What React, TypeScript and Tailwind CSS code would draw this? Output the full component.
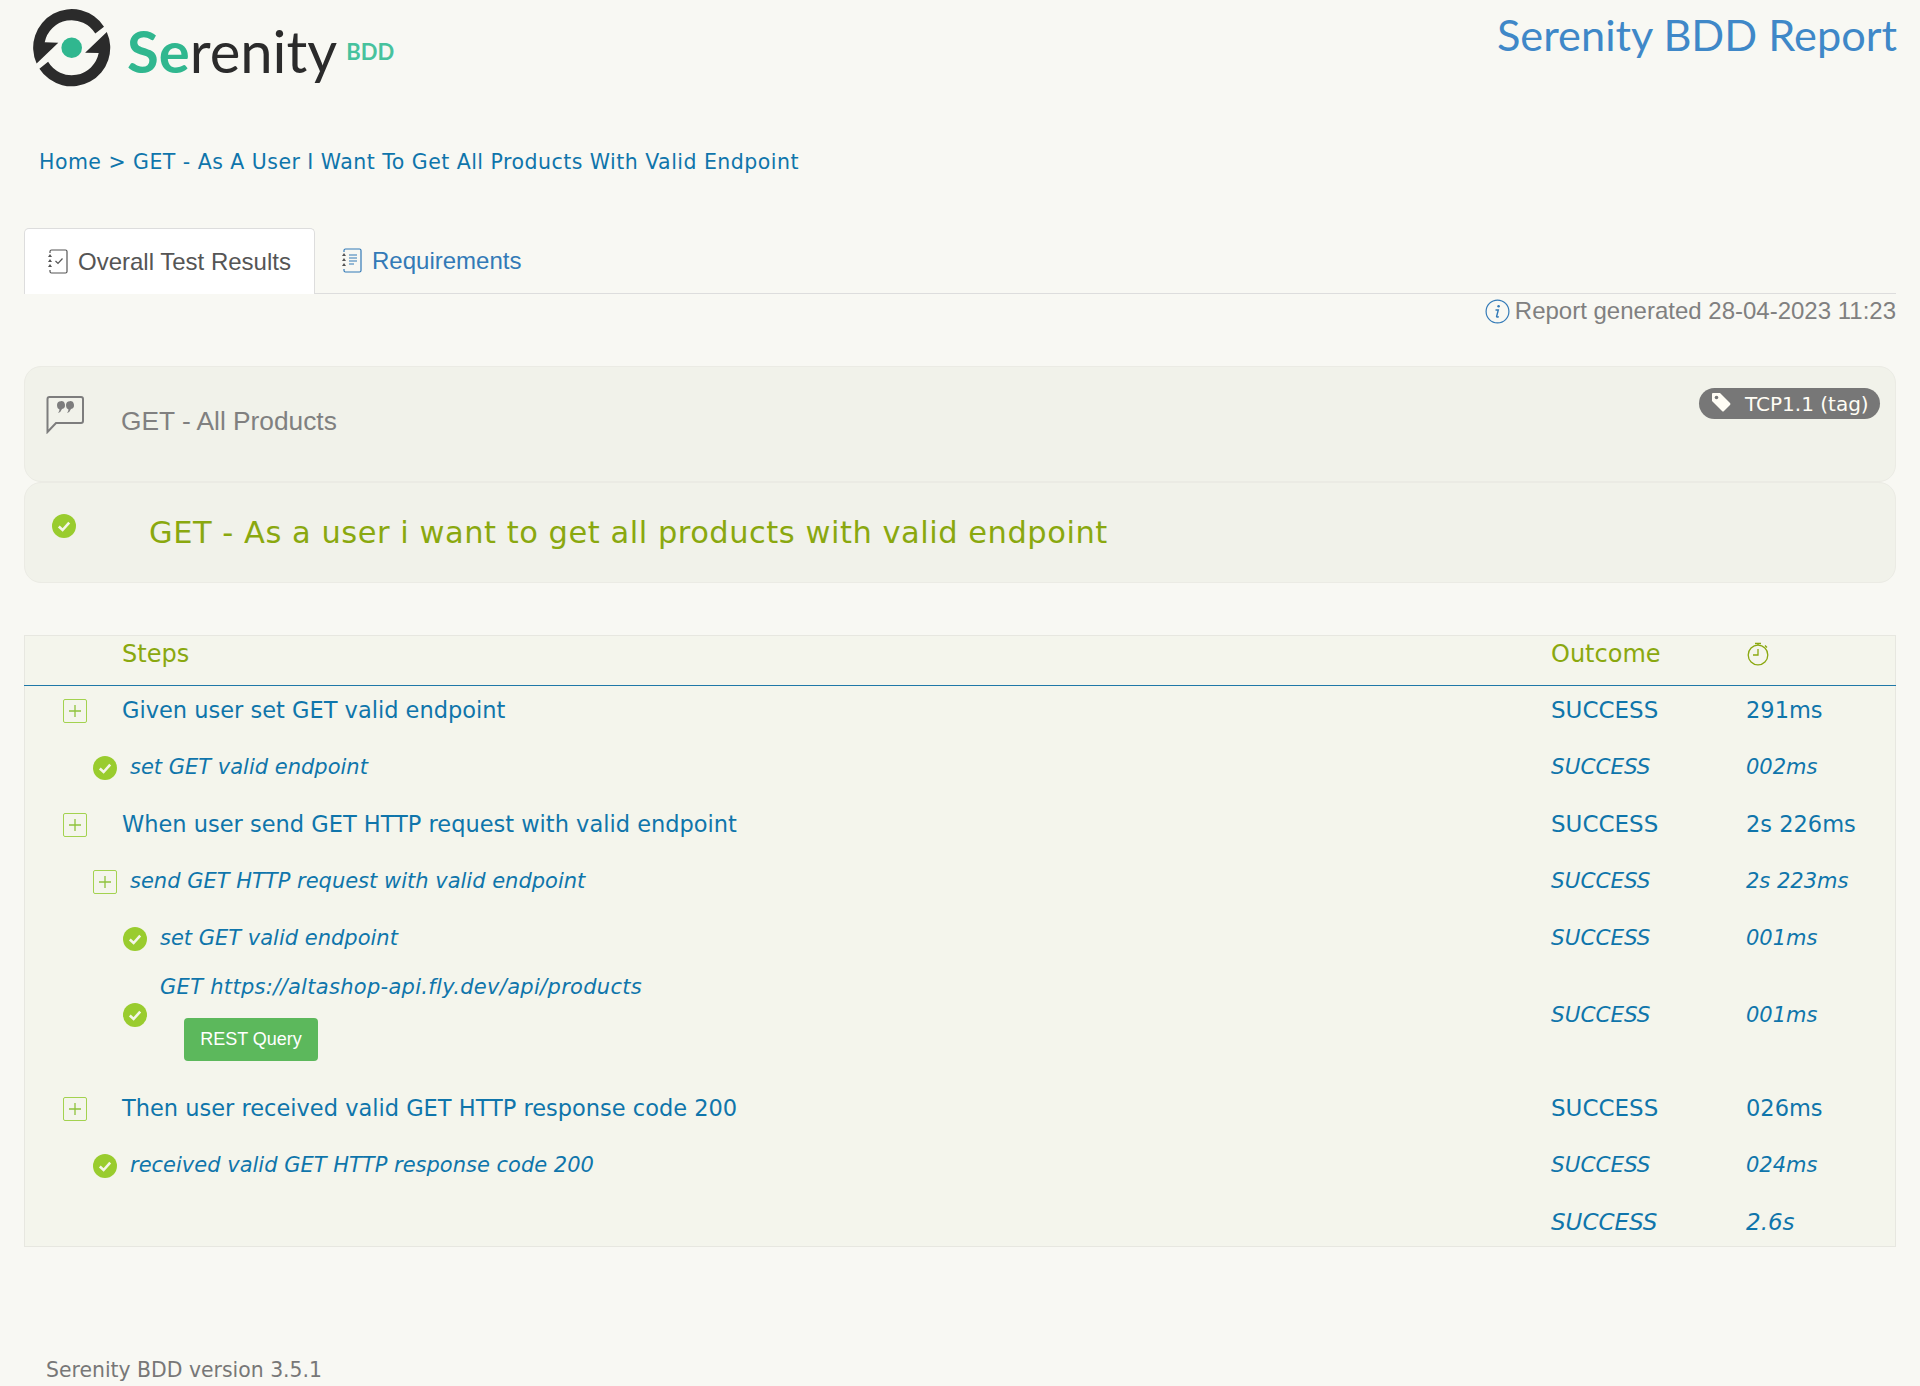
const rowText = 'text-[#0f75ab]';

type Step = {
	label: string;
	time: string;
	icon: 'plus' | 'check';
	indent: number;
	italic?: boolean;
	tall?: boolean;
};

const steps: Step[] = [
	{ label: 'Given user set GET valid endpoint', time: '291ms', icon: 'plus', indent: 0 },
	{ label: 'set GET valid endpoint', time: '002ms', icon: 'check', indent: 1, italic: true },
	{ label: 'When user send GET HTTP request with valid endpoint', time: '2s 226ms', icon: 'plus', indent: 0 },
	{ label: 'send GET HTTP request with valid endpoint', time: '2s 223ms', icon: 'plus', indent: 1, italic: true },
	{ label: 'set GET valid endpoint', time: '001ms', icon: 'check', indent: 2, italic: true },
	{ label: 'GET https://altashop-api.fly.dev/api/products', time: '001ms', icon: 'check', indent: 2, italic: true, tall: true },
	{ label: 'Then user received valid GET HTTP response code 200', time: '026ms', icon: 'plus', indent: 0 },
	{ label: 'received valid GET HTTP response code 200', time: '024ms', icon: 'check', indent: 1, italic: true },
];

function Logo() {
	return (
		<div className="flex items-start">
			<svg width="100" height="95" viewBox="0 0 100 95" className="ml-[25px] shrink-0">
				<path d="M79 26.700 A38.500 38.500 0 0 0 11.600 63.500 L33.300 42.700 L19.700 42.300 A27.500 27.500 0 0 1 70.300 33.600 Z" fill="#2b2b2b" />
				<path d="M14.400 68.700 A38.500 38.500 0 0 0 81.800 31.900 L60.100 52.700 L73.700 53.100 A27.500 27.500 0 0 1 23.100 61.800 Z" fill="#2b2b2b" />
				<circle cx="46.700" cy="47.700" r="10.300" fill="#30b78f" />
			</svg>
			<div className="ml-[2px] mt-[16px] flex items-start font-['Lato',sans-serif] text-[58px] leading-[70px] text-[#2b2b2b]">
				<span className="font-bold text-[#30b78f]">Se</span>
				<span>renity</span>
				<span className="ml-[9px] mt-[23px] text-[22px] font-bold leading-[26px] text-[#47c29d]">BDD</span>
			</div>
		</div>
	);
}

function CheckIcon({ className = '' }: { className?: string }) {
	return (
		<svg width="24" height="24" viewBox="0 0 24 24" className={`shrink-0 ${className}`}>
			<circle cx="12" cy="12" r="12" fill="#99cc2e" />
			<path d="M6.800 12.500 L10.600 16 L17.200 8.600" fill="none" stroke="#f4f6e8" strokeWidth="2.600" />
		</svg>
	);
}

function PlusBox() {
	return (
		<div className="flex h-[24px] w-[24px] shrink-0 items-center justify-center rounded-[2px] border-[1.5px] border-[#a3d24f]">
			<svg width="12" height="12" viewBox="0 0 12 12">
				<path d="M6 0 V12 M0 6 H12" stroke="#8fc23c" strokeWidth="1.300" />
			</svg>
		</div>
	);
}

function TabIcon({ lines, color }: { lines?: boolean; color: string }) {
	return (
		<svg width="21" height="25" viewBox="0 0 21 25" fill="none" className="shrink-0">
			<path d="M3 4 V2.500 Q3 1 4.500 1 H18.500 Q20 1 20 2.500 V22.500 Q20 24 18.500 24 H4.500 Q3 24 3 22.500 V21" stroke={color} strokeWidth="1.200" />
			<path d="M3 5 L5 8 H1 Z M3 10 L5 13 H1 Z M3 15 L5 18 H1 Z" fill="#555555" />
			{lines ? (
				<path d="M8 7 H16 M8 10 H16 M8 13 H16 M8 16 H13" stroke={color} strokeWidth="1.200" />
			) : (
				<path d="M8.500 12 L11 14.500 L15.500 9.500" stroke="#555555" strokeWidth="1.200" />
			)}
		</svg>
	);
}

function InfoIcon() {
	return (
		<svg width="25" height="25" viewBox="0 0 25 25" fill="none" className="shrink-0">
			<circle cx="12.500" cy="12.500" r="11.400" stroke="#337ab7" strokeWidth="1.200" />
			<circle cx="13.600" cy="7.200" r="1.300" fill="#337ab7" />
			<path d="M10.500 11 H13.300 L11.600 17.500 Q11.400 18.600 13.800 17.600" stroke="#337ab7" strokeWidth="1.400" />
		</svg>
	);
}

function App() {
	return (
		<div className="h-[1386px] overflow-hidden bg-[#f8f8f3] font-['Liberation_Sans',sans-serif]">
			<div className="flex h-[96px] justify-between">
				<Logo />
				<div className="mr-[23px] mt-[8px] font-['Lato',sans-serif] text-[43.3px] leading-[53px] text-[#3f88c8]">
					Serenity BDD Report
				</div>
			</div>
			<div className={`ml-[39px] mt-[53px] font-['DejaVu_Sans',sans-serif] text-[20.5px] leading-[26px] tracking-[0.47px] ${rowText}`}>
				Home &gt; GET - As A User I Want To Get All Products With Valid Endpoint
			</div>

			<div className="mx-[24px] mt-[53px] flex h-[66px] border-b border-[#dddddd] text-[24px]">
				<div className="flex h-[66px] w-[291px] items-center gap-[10px] rounded-t-[5px] border border-b-0 border-[#dddddd] bg-white pl-[22px] text-[#555555]">
					<TabIcon color="#555555" />
					Overall Test Results
				</div>
				<div className="flex items-center gap-[10px] pl-[26px] text-[#337ab7]">
					<TabIcon lines color="#337ab7" />
					Requirements
				</div>
			</div>
			<div className="mx-[24px] flex items-center justify-end gap-[5px] text-[24px] leading-[34px] text-[#808080]">
				<InfoIcon />
				Report generated 28-04-2023 11:23
			</div>

			<div className="mx-[24px] mt-[38px] flex h-[116px] justify-between rounded-[17px] border border-[#ebebe4] bg-[#f1f2ea]">
				<div className="flex items-start">
					<svg width="38" height="38" viewBox="0 0 38 38" fill="none" className="ml-[21px] mt-[29px]">
						<path d="M1.500 36 V3 Q1.500 1 3.500 1 H35 Q37 1 37 3 V25 Q37 27 35 27 H10 Z" stroke="#7d7d7d" strokeWidth="2" />
						<path d="M11 9 a4 4 0 1 1 5 4 q-1 3 -4 4 q1.500 -2 1.500 -3.500 q-2.500 -1 -2.500 -4.500 M20 9 a4 4 0 1 1 5 4 q-1 3 -4 4 q1.500 -2 1.500 -3.500 q-2.500 -1 -2.500 -4.500" fill="#7d7d7d" />
					</svg>
					<div className="ml-[37px] mt-[36px] text-[26.3px] leading-[36px] text-[#808080]">GET - All Products</div>
				</div>
				<div className="mr-[15px] mt-[21px] flex h-[31px] w-[181px] items-center rounded-full bg-[#777777] pl-[11px] font-['DejaVu_Sans',sans-serif] text-[20px] text-[#fffdf5]">
					<svg width="22" height="22" viewBox="0 0 22 22" className="shrink-0 -translate-y-[2px]">
						<path d="M2 3 Q2 2 3 2 H10 L20 12 Q21 13 20 14 L14 20 Q13 21 12 20 L2 10 Z" fill="#fffdf5" />
						<circle cx="6.500" cy="6.500" r="1.800" fill="#777777" />
					</svg>
					<span className="ml-[13px]">TCP1.1 (tag)</span>
				</div>
			</div>

			<div className="mx-[24px] flex h-[101px] items-start rounded-[17px] border border-[#ebebe4] bg-[#f1f2ea]">
				<div className="ml-[27px] mt-[31px]">
					<CheckIcon />
				</div>
				<div className="ml-[73px] mt-[29px] font-['DejaVu_Sans',sans-serif] text-[30.5px] leading-[42px] tracking-[0.52px] text-[#8aa80f]">
					GET - As a user i want to get all products with valid endpoint
				</div>
			</div>

			<div className="mx-[24px] mt-[52px] h-[612px] border border-[#e7e7e0] bg-[#f4f5ec] font-['DejaVu_Sans',sans-serif]">
				<div className="-mx-px flex h-[50px] items-start border-b border-[#1f78a8] text-[24px] leading-[32px] text-[#8aa80f]">
					<div className="ml-[98px] mt-[2px] flex-1">Steps</div>
					<div className="mt-[2px] w-[195px]">Outcome</div>
					<div className="mt-[6px] w-[150px]">
						<svg width="24" height="24" viewBox="0 0 24 24" fill="none">
							<circle cx="12" cy="13" r="9.800" stroke="#8aa80f" strokeWidth="1.300" />
							<path d="M12 7 V13 H7 M9 1.500 H15 M12 1.500 V3 M19 3.500 L21 5.500" stroke="#8aa80f" strokeWidth="1.300" />
						</svg>
					</div>
				</div>
				<div className="-mt-[4px]">
					{steps.map((step) => (
						<StepRow key={step.label + step.time} step={step} />
					))}
				</div>
				<div className={`flex h-[53px] items-start pt-[13px] text-[23px] italic leading-[31px] ${rowText}`}>
					<div className="flex-1" />
					<div className="w-[195px]">SUCCESS</div>
					<div className="w-[149px]">2.6s</div>
				</div>
			</div>

			<div className="ml-[46px] mt-[110px] font-['DejaVu_Sans',sans-serif] text-[20.4px] leading-[26px] text-[#777777]">
				Serenity BDD version 3.5.1
			</div>
		</div>
	);
}

function StepRow({ step }: { step: Step }) {
	const labelSize = step.italic ? 'text-[21px] italic' : 'text-[22.5px]';
	const outcomeSize = step.italic ? 'text-[21.5px] italic' : 'text-[23px]';
	const timeSize = step.italic ? 'text-[21px] italic' : 'text-[22.5px]';
	const pad = step.indent === 0 ? 'pl-[38px]' : step.indent === 1 ? 'pl-[68px]' : 'pl-[98px]';
	const gap = step.indent === 0 ? 'gap-[35px]' : 'gap-[13px]';
	return (
		<div className={`flex ${step.tall ? 'h-[113px] pb-[16px]' : 'h-[57px]'} items-center ${rowText}`}>
			{step.tall ? (
				<div className={`flex flex-1 items-start self-stretch pt-[6px] ${pad} ${gap} ${labelSize}`}>
					<CheckIcon className="mt-[30px]" />
					<div>
						<div className="leading-[28px] tracking-[0.3px]">{step.label}</div>
						<div className="ml-[24px] mt-[17px] flex h-[43px] w-[134px] items-center justify-center rounded-[4px] bg-[#5cb85c] font-['Liberation_Sans',sans-serif] text-[18px] not-italic text-white">
							REST Query
						</div>
					</div>
				</div>
			) : (
				<div className={`flex flex-1 items-center ${pad} ${gap} ${labelSize}`}>
					{step.icon === 'plus' ? <PlusBox /> : <CheckIcon />}
					<span>{step.label}</span>
				</div>
			)}
			<div className={`w-[195px] ${outcomeSize}`}>SUCCESS</div>
			<div className={`w-[149px] ${timeSize}`}>{step.time}</div>
		</div>
	);
}

export default App;
